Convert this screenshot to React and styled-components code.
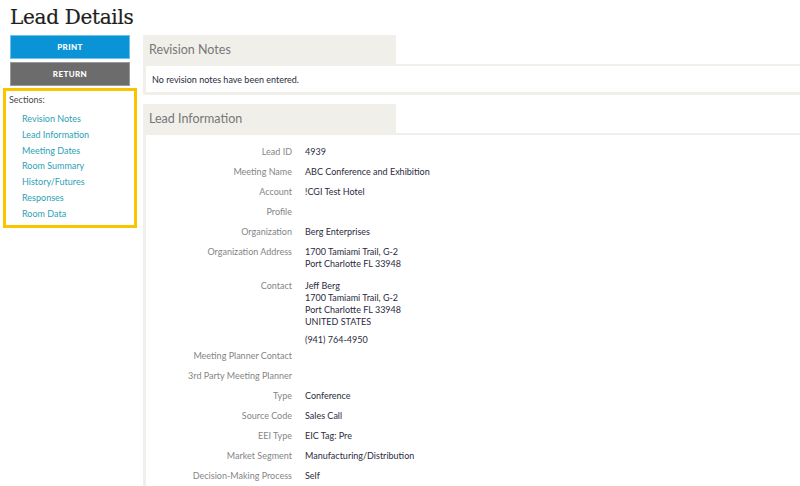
import styled, { createGlobalStyle } from 'styled-components';

const GlobalStyle = createGlobalStyle`
  html, body {
    margin: 0;
    padding: 0;
    background: #fff;
  }
  body {
    font-family: Lato, "Open Sans", sans-serif;
    overflow: hidden;
  }
  * {
    box-sizing: border-box;
  }
`;

const sections = [
  'Revision Notes',
  'Lead Information',
  'Meeting Dates',
  'Room Summary',
  'History/Futures',
  'Responses',
  'Room Data',
];

const leadRows = [
  { label: 'Lead ID', lines: ['4939'] },
  { label: 'Meeting Name', lines: ['ABC Conference and Exhibition'] },
  { label: 'Account', lines: ['!CGI Test Hotel'] },
  { label: 'Profile', lines: [] },
  { label: 'Organization', lines: ['Berg Enterprises'] },
  { label: 'Organization Address', lines: ['1700 Tamiami Trail, G-2', 'Port Charlotte FL 33948'], pb: 6 },
  {
    label: 'Contact',
    lines: ['Jeff Berg', '1700 Tamiami Trail, G-2', 'Port Charlotte FL 33948', 'UNITED STATES'],
    extra: '(941) 764-4950',
    pb: 0,
  },
  { label: 'Meeting Planner Contact', lines: [] },
  { label: '3rd Party Meeting Planner', lines: [] },
  { label: 'Type', lines: ['Conference'] },
  { label: 'Source Code', lines: ['Sales Call'] },
  { label: 'EEI Type', lines: ['EIC Tag: Pre'] },
  { label: 'Market Segment', lines: ['Manufacturing/Distribution'] },
  { label: 'Decision-Making Process', lines: ['Self'] },
];

const App = () => {
  return (
    <>
      <GlobalStyle />
      <Page>
        <Title>Lead Details</Title>
        <Layout>
          <Sidebar>
            <Button $bg="#0a94d6" $edge="#6fc0ea">PRINT</Button>
            <Button $bg="#6c6c6c" $edge="#9a9a9a">RETURN</Button>
            <SectionBox>
              <SectionTitle>Sections:</SectionTitle>
              <SectionList>
                {sections.map((s) => (
                  <li key={s}>
                    <a href="#">{s}</a>
                  </li>
                ))}
              </SectionList>
            </SectionBox>
          </Sidebar>
          <Main>
            <Panel>
              <PanelHeader>Revision Notes</PanelHeader>
              <PanelBody $closed>
                <Note>No revision notes have been entered.</Note>
              </PanelBody>
            </Panel>
            <Panel>
              <PanelHeader>Lead Information</PanelHeader>
              <PanelBody>
                <Rows>
                  {leadRows.map((r) => (
                    <Row key={r.label} $pb={r.pb}>
                      <Label>{r.label}</Label>
                      <Value>
                        {r.lines.map((l) => (
                          <div key={l}>{l}</div>
                        ))}
                        {r.extra && <Extra>{r.extra}</Extra>}
                      </Value>
                    </Row>
                  ))}
                </Rows>
              </PanelBody>
            </Panel>
          </Main>
        </Layout>
      </Page>
    </>
  );
};

const Page = styled.div`
  width: 800px;
  height: 486px;
  padding-left: 3px;
  overflow: hidden;
`;

const Title = styled.h1`
  margin: 0;
  height: 35px;
  padding: 4px 0 0 7px;
  font-family: "DejaVu Serif", "Liberation Serif", serif;
  font-weight: normal;
  font-size: 20px;
  line-height: 26px;
  color: #1e1e1e;
  letter-spacing: -0.3px;
  -webkit-text-stroke: 0.2px #1e1e1e;
`;

const Layout = styled.div`
  display: flex;
  gap: 6px;
`;

const Sidebar = styled.div`
  width: 134px;
  flex-shrink: 0;
  display: flex;
  flex-direction: column;
`;

const Button = styled.button`
  margin: 0 0 3px 7px;
  width: 120px;
  height: 24px;
  border: 1px solid ${(p) => p.$edge};
  background: ${(p) => p.$bg};
  color: #fff;
  font-family: Lato, sans-serif;
  font-weight: 900;
  font-size: 8px;
  letter-spacing: 0.4px;
  cursor: pointer;
`;

const SectionBox = styled.div`
  margin-top: -1px;
  border: 3px solid #fbc400;
  padding: 1px 0 3px 3px;
`;

const SectionTitle = styled.div`
  font-size: 9px;
  line-height: 16px;
  color: #4a4a4a;
`;

const SectionList = styled.ul`
  list-style: none;
  margin: 3px 0 0;
  padding: 0 0 0 13px;

  li {
    line-height: 15.8px;
    font-size: 9px;
  }

  a {
    color: #2c9fb6;
    text-decoration: none;
  }
`;

const Main = styled.div`
  flex: 1;
  display: flex;
  flex-direction: column;
  gap: 9px;
`;

const Panel = styled.section`
  display: flex;
  flex-direction: column;
`;

const PanelHeader = styled.h2`
  margin: 0;
  width: 253px;
  height: 29px;
  padding-left: 6px;
  background: #f1efea;
  color: #777;
  font-weight: normal;
  font-size: 12.5px;
  line-height: 29px;
`;

const PanelBody = styled.div`
  border-top: 2px solid #f1efea;
  border-left: 3px solid #f1efea;
  border-bottom: ${(p) => (p.$closed ? '3px solid #f1efea' : 'none')};
  min-height: 26px;
`;

const Note = styled.p`
  margin: 0;
  padding: 8px 6px 6px;
  font-size: 9px;
  line-height: 12px;
  color: #2b2b40;
`;

const Rows = styled.div`
  padding-top: 7px;
`;

const Row = styled.div`
  display: grid;
  grid-template-columns: 146px 1fr;
  column-gap: 13px;
  padding: 4px 0 ${(p) => (p.$pb === undefined ? 4 : p.$pb)}px;
  font-size: 9px;
  line-height: 12px;
`;

const Label = styled.div`
  text-align: right;
  color: #858585;
`;

const Value = styled.div`
  color: #2b2b40;
`;

const Extra = styled.div`
  margin-top: 6px;
`;

export default App;
